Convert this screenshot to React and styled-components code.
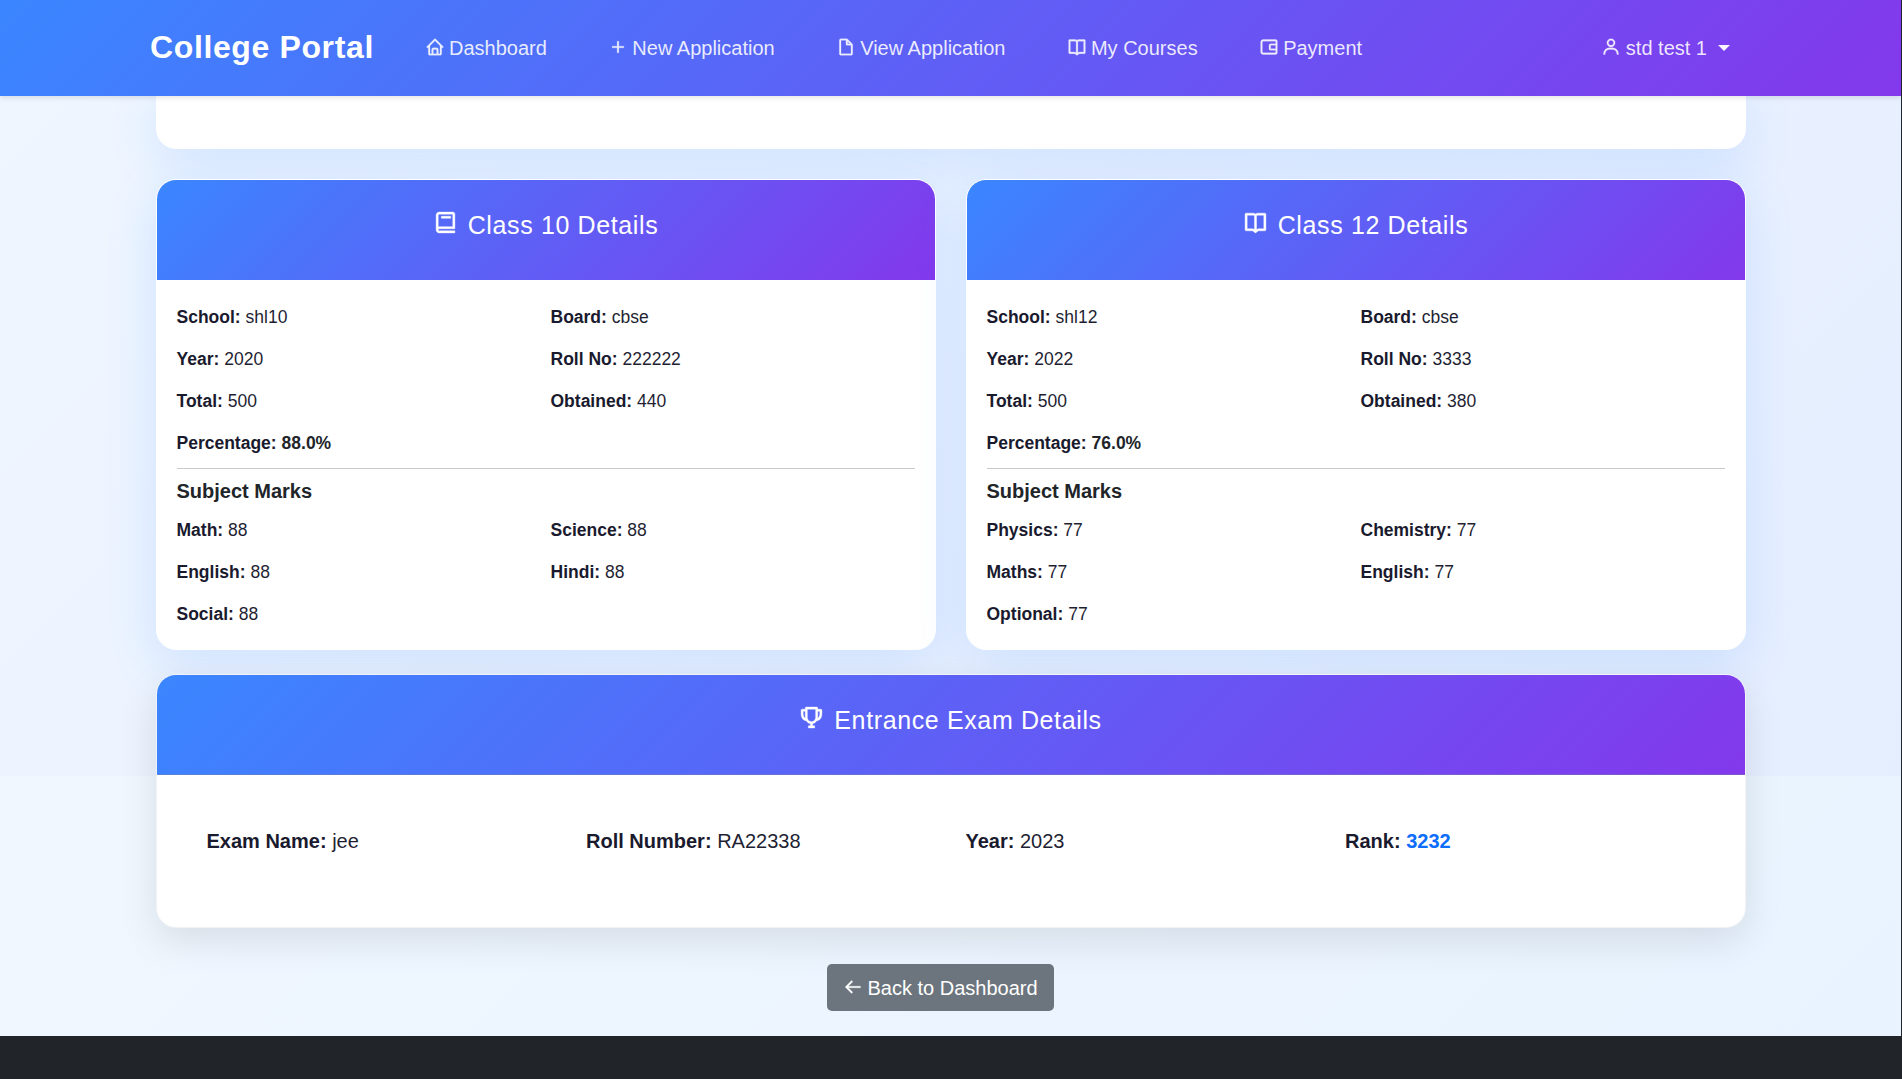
import React from "react";
import styled, { createGlobalStyle } from "styled-components";
import {
  BiHome, BiPlus, BiFileBlank, BiBookOpen, BiWalletAlt, BiUser, BiBook, BiTrophy, BiArrowBack,
} from "react-icons/bi";

const brandGradient = "linear-gradient(135deg, #3a86ff 0%, #8338ec 100%)";

const GlobalStyle = createGlobalStyle`
  *, *::before, *::after { box-sizing: border-box; }
  html { background: #212529; }
  body {
    margin: 0;
    font-family: Arial, "Liberation Sans", sans-serif;
    font-size: 20px;
    line-height: 1.5;
    color: #212529;
    overflow: hidden;
  }
`;

const Page = styled.div`
  display: flex;
  flex-direction: column;
  height: 1079px;
  width: calc(100% - 1px);
`;

const Navbar = styled.header`
  position: relative;
  z-index: 1;
  flex: 0 0 96px;
  display: flex;
  align-items: center;
  padding: 0 171px 0 150px;
  background: ${brandGradient};
  box-shadow: 0 2px 5px rgba(0, 0, 0, 0.1);
`;

const Brand = styled.div`
  width: 275px;
  color: #fff;
  font-size: 32px;
  font-weight: 700;
  letter-spacing: 0.625px;
  line-height: 40px;
  padding-bottom: 2px;
`;

const Nav = styled.nav`
  display: flex;
  flex: 1;
  gap: 61.5px;
`;

const NavLink = styled.a`
  display: flex;
  align-items: center;
  gap: 4px;
  color: rgba(255, 255, 255, 0.88);
  white-space: nowrap;

  svg {
    width: 20px;
    height: 20px;
    margin-bottom: 2px;
    stroke-width: 0.3px;
  }
`;

const UserMenu = styled(NavLink)`
  gap: 5px;
`;

const Caret = styled.span`
  margin-left: 6px;
  border-top: 6px solid rgba(255, 255, 255, 0.95);
  border-left: 6px solid transparent;
  border-right: 6px solid transparent;
`;

const Main = styled.main`
  flex: 0 0 940px;
  display: flex;
  flex-direction: column;
  align-items: stretch;
  padding: 0 155px 0 156px;
  background:
    linear-gradient(135deg, #f0f7ff 0%, #e6f2ff 100%) 0 680px / 100% 1079px no-repeat,
    linear-gradient(135deg, #f0f7ff 0%, #e5eeff 100%) 0 -399px / 100% 1079px no-repeat;
`;

const Card = styled.section`
  border-radius: 20px;
  background: #fff;
  overflow: hidden;
  box-shadow: ${(p) => (p.$neutral ? "0 12.5px 38px rgba(0, 0, 0, 0.1)" : "0 12.5px 50px rgba(58, 134, 255, 0.16)")};
  border: 1px solid ${(p) => (p.$neutral ? "#f0f2f5" : "#fff")};
`;

const PreviousCard = styled(Card)`
  height: 53px;
  border-radius: 0 0 20px 20px;
`;

const CardPair = styled.div`
  display: grid;
  grid-template-columns: 1fr 1fr;
  gap: 30px;
  margin: 30px 0 24px;
`;

const CardHeader = styled.header`
  height: 100px;
  display: flex;
  justify-content: center;
  align-items: flex-start;
  gap: 10px;
  padding: 30px 1px 0 0;
  background: ${brandGradient};
  border-bottom: ${(p) => (p.$ruled ? "1px solid rgba(128, 128, 160, 0.4)" : "0")};
  color: #fff;
  font-size: 25px;
  letter-spacing: 0.625px;
  line-height: 30px;

  svg {
    width: 25px;
    height: 25px;
    stroke-width: 0.4px;
  }
`;

const CardBody = styled.div`
  height: 369px;
  padding: 20px 20px 0 19.5px;
`;

const DetailGrid = styled.div`
  display: grid;
  grid-template-columns: 374px 1fr;
  grid-auto-rows: 42px;
  font-size: 17.5px;
  line-height: 34px;
`;

const Field = styled.div`
  color: ${(p) => (p.$strong ? "#212529" : "#1f1f33")};
  font-weight: ${(p) => (p.$strong ? 700 : 400)};
`;

const Label = styled.strong`
  color: #1a1a2e;
  font-weight: 700;
`;

const SubjectHeading = styled.h6`
  margin: 0;
  height: 45px;
  padding-top: 7px;
  border-top: 1px solid #c8c9ca;
  font-size: 20px;
  font-weight: 700;
  line-height: 30px;
`;

const ExamGrid = styled.div`
  display: grid;
  grid-template-columns: repeat(4, 379.5px);
  height: 152px;
  padding: 51px 49px 0 49.5px;
  line-height: 30px;
`;

const Rank = styled.span`
  color: #0d6efd;
  font-weight: 700;
`;

const BackButton = styled.button`
  align-self: center;
  display: flex;
  align-items: center;
  justify-content: center;
  gap: 4px;
  width: 227px;
  height: 47px;
  margin: 36px 21px 0 0;
  padding: 0;
  border: 0;
  border-radius: 5px;
  background: #6c757d;
  color: #fff;
  font: 20px/30px Arial, "Liberation Sans", sans-serif;

  svg {
    width: 20px;
    height: 20px;
    margin-bottom: 2px;
    stroke-width: 0.3px;
  }
`;

const Footer = styled.footer`
  flex: 1;
  background: #212529;
`;

const navItems = [
  [BiHome, "Dashboard"],
  [BiPlus, "New Application"],
  [BiFileBlank, "View Application"],
  [BiBookOpen, "My Courses"],
  [BiWalletAlt, "Payment"],
];

const schools = [
  {
    icon: BiBook,
    title: "Class 10 Details",
    details: [["School", "shl10"], ["Board", "cbse"], ["Year", "2020"], ["Roll No", "222222"], ["Total", "500"], ["Obtained", "440"], ["Percentage", "88.0%"]],
    marks: [["Math", "88"], ["Science", "88"], ["English", "88"], ["Hindi", "88"], ["Social", "88"]],
  },
  {
    icon: BiBookOpen,
    title: "Class 12 Details",
    details: [["School", "shl12"], ["Board", "cbse"], ["Year", "2022"], ["Roll No", "3333"], ["Total", "500"], ["Obtained", "380"], ["Percentage", "76.0%"]],
    marks: [["Physics", "77"], ["Chemistry", "77"], ["Maths", "77"], ["English", "77"], ["Optional", "77"]],
  },
];

const exam = [["Exam Name", "jee"], ["Roll Number", "RA22338"], ["Year", "2023"], ["Rank", "3232"]];

function Details({ items }) {
  return (
    <DetailGrid>
      {items.map(([label, value]) => (
        <Field key={label} $strong={label === "Percentage"}>
          <Label>{label}:</Label> {value}
        </Field>
      ))}
    </DetailGrid>
  );
}

export default function App() {
  return (
    <>
      <GlobalStyle />
      <Page>
        <Navbar>
          <Brand>College Portal</Brand>
          <Nav>
            {navItems.map(([Icon, label]) => (
              <NavLink key={label}><Icon />{label}</NavLink>
            ))}
          </Nav>
          <UserMenu><BiUser />std test 1 <Caret /></UserMenu>
        </Navbar>
        <Main>
          <PreviousCard />
          <CardPair>
            {schools.map(({ icon: Icon, title, details, marks }) => (
              <Card key={title}>
                <CardHeader><Icon />{title}</CardHeader>
                <CardBody>
                  <Details items={details} />
                  <SubjectHeading>Subject Marks</SubjectHeading>
                  <Details items={marks} />
                </CardBody>
              </Card>
            ))}
          </CardPair>
          <Card $neutral>
            <CardHeader $ruled><BiTrophy />Entrance Exam Details</CardHeader>
            <ExamGrid>
              {exam.map(([label, value]) => (
                <Field key={label}>
                  <Label>{label}:</Label> {label === "Rank" ? <Rank>{value}</Rank> : value}
                </Field>
              ))}
            </ExamGrid>
          </Card>
          <BackButton><BiArrowBack />Back to Dashboard</BackButton>
        </Main>
        <Footer />
      </Page>
    </>
  );
}
